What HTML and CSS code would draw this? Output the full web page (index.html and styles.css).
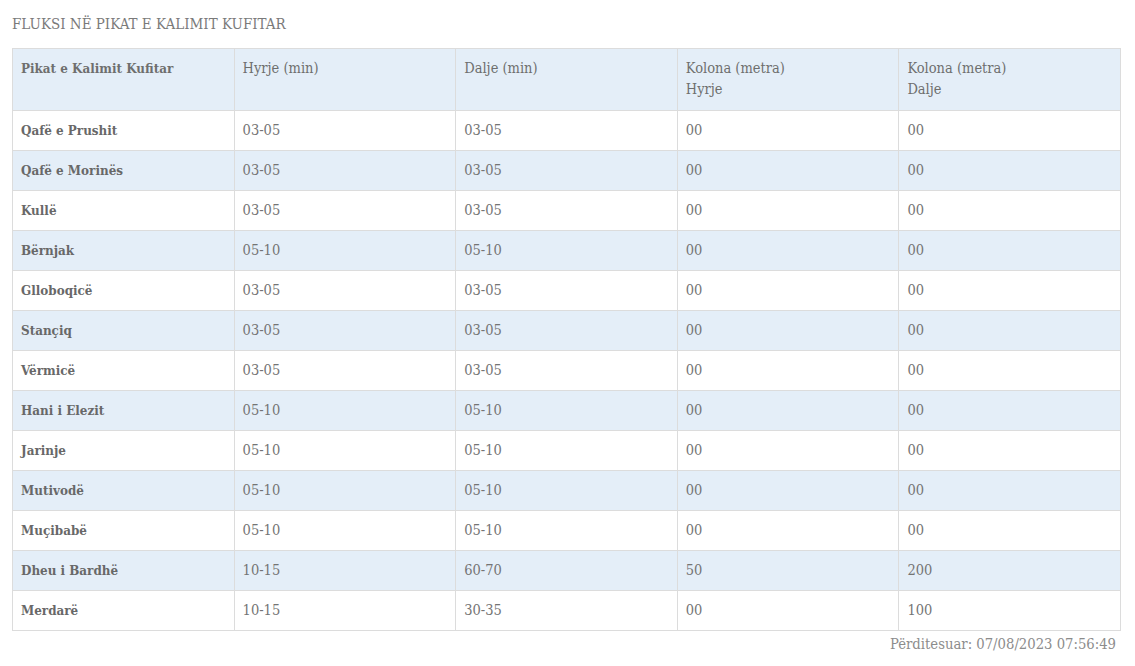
FILE: index.html
```html
<!DOCTYPE html>
<html lang="sq">
<head>
<meta charset="utf-8">
<link rel="stylesheet" href="styles.css">
</head>
<body>
<div class="wrap">
  <h2 class="title">FLUKSI NË PIKAT E KALIMIT KUFITAR</h2>
  <table class="flux">
    <thead>
      <tr>
        <th>Pikat e Kalimit Kufitar</th>
        <th>Hyrje (min)</th>
        <th>Dalje (min)</th>
        <th>Kolona (metra)<br>Hyrje</th>
        <th>Kolona (metra)<br>Dalje</th>
      </tr>
    </thead>
    <tbody>
      <tr><td>Qafë e Prushit</td><td>03-05</td><td>03-05</td><td>00</td><td>00</td></tr>
      <tr><td>Qafë e Morinës</td><td>03-05</td><td>03-05</td><td>00</td><td>00</td></tr>
      <tr><td>Kullë</td><td>03-05</td><td>03-05</td><td>00</td><td>00</td></tr>
      <tr><td>Bërnjak</td><td>05-10</td><td>05-10</td><td>00</td><td>00</td></tr>
      <tr><td>Glloboqicë</td><td>03-05</td><td>03-05</td><td>00</td><td>00</td></tr>
      <tr><td>Stançiq</td><td>03-05</td><td>03-05</td><td>00</td><td>00</td></tr>
      <tr><td>Vërmicë</td><td>03-05</td><td>03-05</td><td>00</td><td>00</td></tr>
      <tr><td>Hani i Elezit</td><td>05-10</td><td>05-10</td><td>00</td><td>00</td></tr>
      <tr><td>Jarinje</td><td>05-10</td><td>05-10</td><td>00</td><td>00</td></tr>
      <tr><td>Mutivodë</td><td>05-10</td><td>05-10</td><td>00</td><td>00</td></tr>
      <tr><td>Muçibabë</td><td>05-10</td><td>05-10</td><td>00</td><td>00</td></tr>
      <tr><td>Dheu i Bardhë</td><td>10-15</td><td>60-70</td><td>50</td><td>200</td></tr>
      <tr><td>Merdarë</td><td>10-15</td><td>30-35</td><td>00</td><td>100</td></tr>
    </tbody>
  </table>
  <div class="updated">Përditesuar: 07/08/2023 07:56:49</div>
</div>
</body>
</html>
```

FILE: styles.css
```css
html, body {
  margin: 0;
  padding: 0;
  background: #ffffff;
}

body {
  font-family: "DejaVu Serif Condensed", "DejaVu Serif", "Liberation Serif", serif;
  color: #6b6b6b;
}

.wrap {
  padding: 15px 14px 0 12px;
}

.title {
  margin: 0 0 15px 0;
  font-size: 15px;
  font-weight: normal;
  line-height: 18px;
  color: #7a7a7a;
  letter-spacing: 0;
}

.flux {
  width: 100%;
  border-collapse: collapse;
  table-layout: fixed;
  font-size: 14.5px;
}

.flux th,
.flux td {
  border: 1px solid #dcdcdc;
  text-align: left;
  vertical-align: top;
  padding: 9px 8px;
  line-height: 21px;
}

.flux th {
  font-weight: normal;
  background: #e4eef8;
  height: 43px;
  color: #6e6e6e;
}

.flux th:first-child {
  font-weight: bold;
  font-size: 13.3px;
}

.flux td {
  height: 20.85px;
  color: #747474;
}

.flux td:first-child {
  font-weight: bold;
  font-size: 13.3px;
  color: #686868;
}

.flux tbody tr:nth-child(even) td {
  background: #e4eef8;
}

.updated {
  text-align: right;
  font-size: 14.7px;
  line-height: 18px;
  color: #8c8c8c;
  padding: 4px 5px 0 0;
}
```
